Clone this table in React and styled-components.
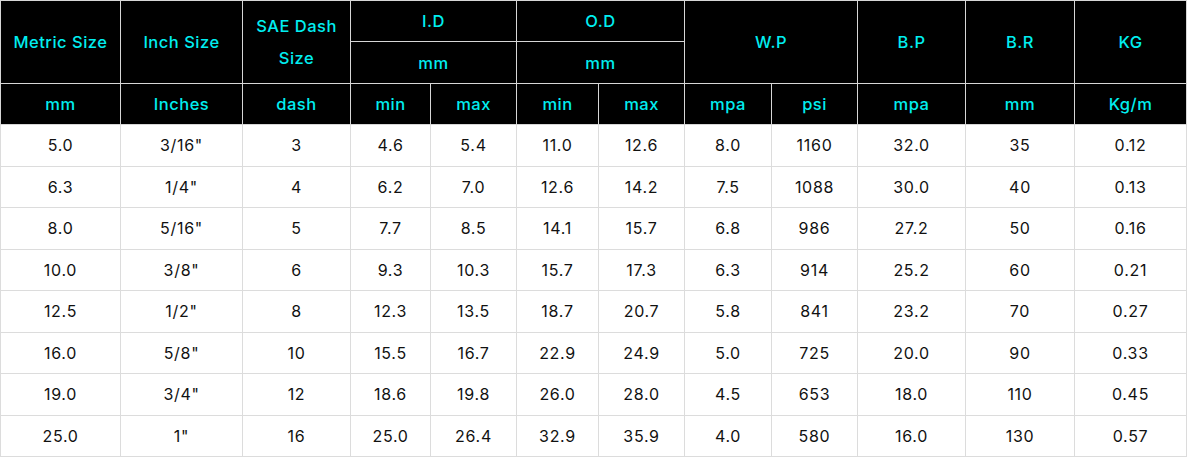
import React from 'react'
import styled, { createGlobalStyle } from 'styled-components'

const GlobalStyle = createGlobalStyle`
  body {
    margin: 0;
    background: #fff;
    font-family: Inter, "Noto Sans", sans-serif;
  }
`

const Wrapper = styled.section`
  width: 1186px;
`

const Table = styled.table`
  width: 1186px;
  table-layout: fixed;
  border-collapse: collapse;
  font-size: 16px;
  text-align: center;
  border-bottom: 1px solid #111;
`

const HeadRow = styled.tr`
  height: ${({ $h }) => $h}px;
  background: #000;
`

const HeadCell = styled.th`
  padding: 0 12px;
  font-size: 16.5px;
  font-weight: 500;
  letter-spacing: 0.5px;
  color: #00eef0;
  line-height: 32px;
  border: 1px solid #d6d6d6;
  vertical-align: middle;
`

const Row = styled.tr`
  height: 41.5px;
  background: #fff;
`

const Cell = styled.td`
  padding: 0 8px;
  color: #111;
  font-weight: 400;
  letter-spacing: 0.7px;
  border: 1px solid #dcdcdc;
`

const widths = [120, 122, 108, 80, 86, 82, 86, 87, 86, 108, 109, 112]

const units = ['mm', 'Inches', 'dash', 'min', 'max', 'min', 'max', 'mpa', 'psi', 'mpa', 'mm', 'Kg/m']

const rows = [
  ['5.0', '3/16"', '3', '4.6', '5.4', '11.0', '12.6', '8.0', '1160', '32.0', '35', '0.12'],
  ['6.3', '1/4"', '4', '6.2', '7.0', '12.6', '14.2', '7.5', '1088', '30.0', '40', '0.13'],
  ['8.0', '5/16"', '5', '7.7', '8.5', '14.1', '15.7', '6.8', '986', '27.2', '50', '0.16'],
  ['10.0', '3/8"', '6', '9.3', '10.3', '15.7', '17.3', '6.3', '914', '25.2', '60', '0.21'],
  ['12.5', '1/2"', '8', '12.3', '13.5', '18.7', '20.7', '5.8', '841', '23.2', '70', '0.27'],
  ['16.0', '5/8"', '10', '15.5', '16.7', '22.9', '24.9', '5.0', '725', '20.0', '90', '0.33'],
  ['19.0', '3/4"', '12', '18.6', '19.8', '26.0', '28.0', '4.5', '653', '18.0', '110', '0.45'],
  ['25.0', '1"', '16', '25.0', '26.4', '32.9', '35.9', '4.0', '580', '16.0', '130', '0.57'],
]

const App = () => {
  return (
    <Wrapper>
      <GlobalStyle />
      <Table>
        <colgroup>
          {widths.map((w, i) => (
            <col key={i} style={{ width: w }} />
          ))}
        </colgroup>
        <thead>
          <HeadRow $h={41}>
            <HeadCell rowSpan={2}>Metric Size</HeadCell>
            <HeadCell rowSpan={2}>Inch Size</HeadCell>
            <HeadCell rowSpan={2}>SAE Dash Size</HeadCell>
            <HeadCell colSpan={2}>I.D</HeadCell>
            <HeadCell colSpan={2}>O.D</HeadCell>
            <HeadCell colSpan={2} rowSpan={2}>W.P</HeadCell>
            <HeadCell rowSpan={2}>B.P</HeadCell>
            <HeadCell rowSpan={2}>B.R</HeadCell>
            <HeadCell rowSpan={2}>KG</HeadCell>
          </HeadRow>
          <HeadRow $h={42}>
            <HeadCell colSpan={2}>mm</HeadCell>
            <HeadCell colSpan={2}>mm</HeadCell>
          </HeadRow>
          <HeadRow $h={41}>
            {units.map((u, i) => (
              <HeadCell key={i}>{u}</HeadCell>
            ))}
          </HeadRow>
        </thead>
        <tbody>
          {rows.map((r, i) => (
            <Row key={i}>
              {r.map((v, j) => (
                <Cell key={j}>{v}</Cell>
              ))}
            </Row>
          ))}
        </tbody>
      </Table>
    </Wrapper>
  )
}

export default App
